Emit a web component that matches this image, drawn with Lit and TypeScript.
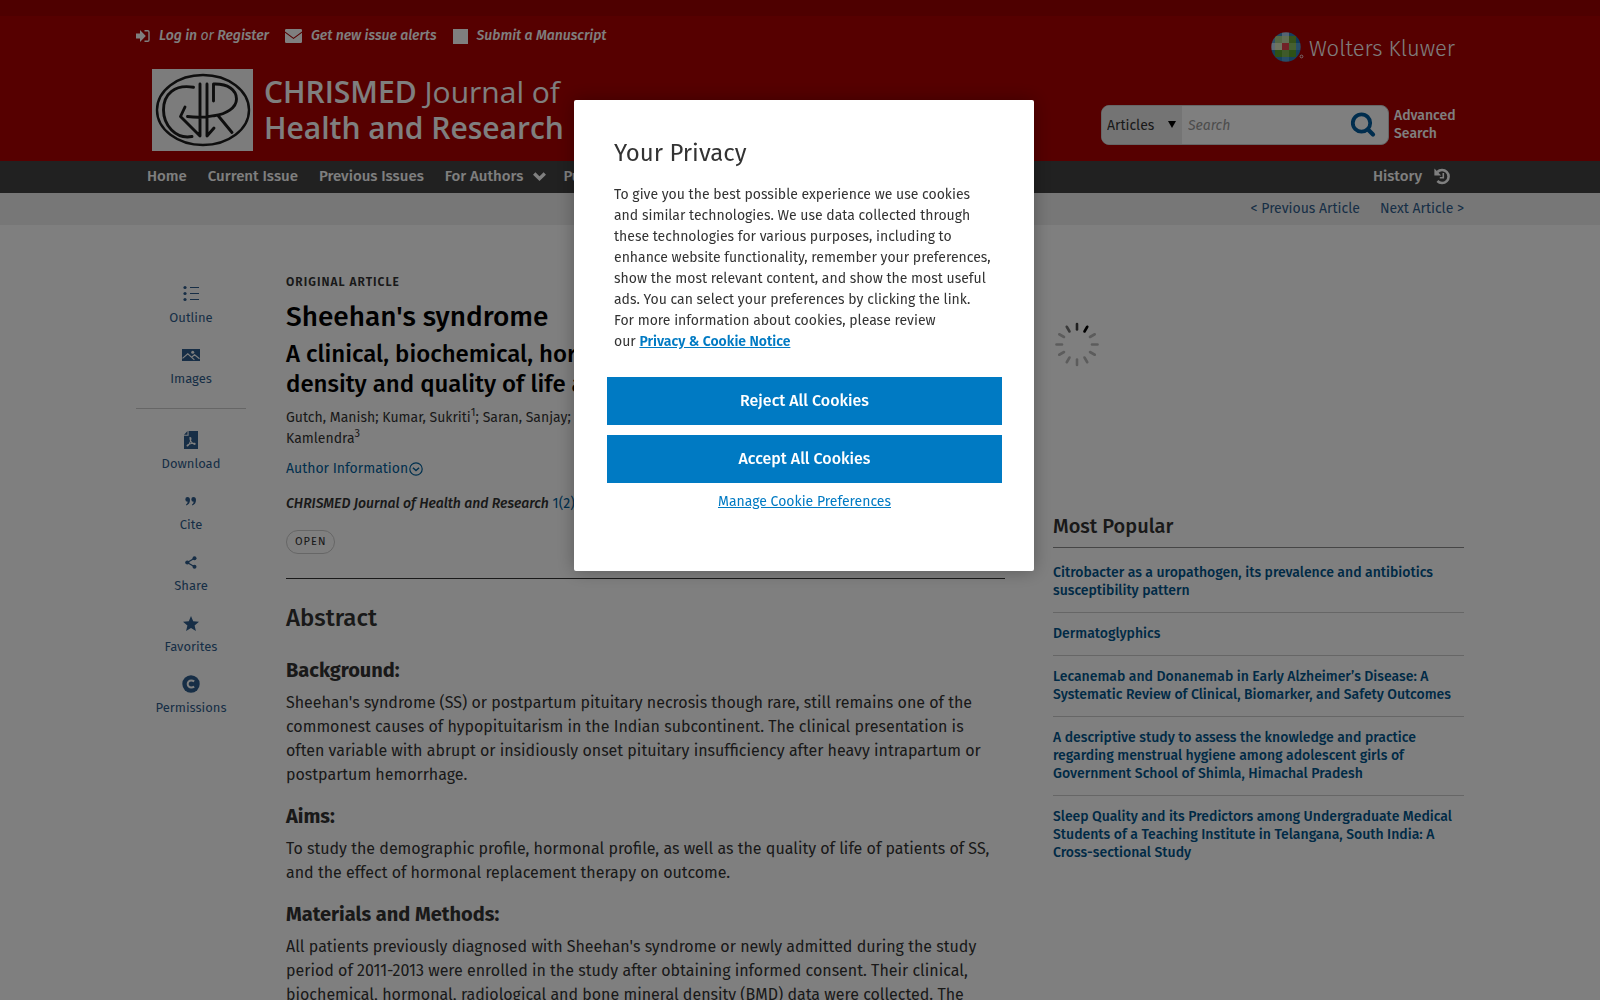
import { LitElement, html, css, svg } from "lit";
import { customElement } from "lit/decorators.js";

const icons = {
  login: svg`<svg width="14" height="14" viewBox="0 0 14 14"><path fill="currentColor" d="M0 4.500h4V1L9.800 7 4 13V9.500H0z"/><path fill="none" stroke="currentColor" stroke-width="1.400" d="M8.500 1.700h3.200q1.300 0 1.300 1.300v8q0 1.300-1.300 1.300H8.500"/></svg>`,
  mail: svg`<svg width="17" height="14" viewBox="0 0 17 14"><path fill="currentColor" d="M0 1.200Q0 0 1.200 0h14.600Q17 0 17 1.200v1.200L8.500 8.700 0 2.400zM0 3.700l8.500 6.300L17 3.700v9.100q0 1.200-1.200 1.200H1.200Q0 14 0 12.800z"/></svg>`,
  square: svg`<svg width="15" height="15" viewBox="0 0 15 15"><rect width="15" height="15" fill="currentColor"/></svg>`,
  chevron: svg`<svg width="13" height="9" viewBox="0 0 13 9"><path fill="none" stroke="currentColor" stroke-width="3.400" d="M1.200 1.500 6.500 6.600l5.300-5.100"/></svg>`,
  history: svg`<svg width="17" height="17" viewBox="0 0 17 17"><path fill="none" stroke="currentColor" stroke-width="2.600" d="M3.400 4A6.500 6.500 0 1 1 3.400 13"/><path fill="currentColor" d="M.4.600v6.800h6.800z"/><path fill="none" stroke="currentColor" stroke-width="1.600" d="M9.300 4.900v4.800H5.800"/></svg>`,
  search: svg`<svg width="26" height="26" viewBox="0 0 26 26"><circle cx="11.500" cy="11" r="8.700" fill="none" stroke="currentColor" stroke-width="3.800"/><path stroke="currentColor" stroke-width="4.200" stroke-linecap="round" d="m18 17.500 5 5"/></svg>`,
  outline: svg`<svg width="18" height="18" viewBox="0 0 18 18"><g fill="currentColor"><circle cx="3" cy="2.500" r="1.600"/><circle cx="3" cy="8.500" r="1.600"/><circle cx="3" cy="14.500" r="1.600"/><path d="M8 2h9v1H8zM8 8h9v1H8zM8 14h9v1H8z"/></g></svg>`,
  images: svg`<svg width="18" height="12" viewBox="0 0 18 12"><rect width="18" height="12" fill="currentColor"/><circle cx="10.700" cy="3.200" r="1.500" fill="#fff"/><path fill="none" stroke="#fff" stroke-width="1.100" d="M.5 9.300 5.800 4.800l6.600 6M9.800 8l2.800-2.200 4.900 4"/></svg>`,
  download: svg`<svg width="14" height="18" viewBox="0 0 14 18"><path fill="currentColor" d="M4.600 0H14v18H0V4.800h4.600zM3.500 0v3.700H0z"/><path fill="none" stroke="#fff" stroke-width="1.100" d="M6 6.500c1.400-.3 1 2.400.2 4.400-1 2.300-2.300 4.500-3 4-.8-.8 3-2.800 7.500-2.600.8.300.4 1.300-.5 1-2-.8-4.600-3.700-4.200-6.800z"/></svg>`,
  cite: svg`<svg width="12" height="9" viewBox="0 0 12 9"><path fill="currentColor" d="M2.500 0Q5 0 5 3q0 4-3.600 5.500L1 7.400q1.700-.9 1.700-2.600Q.3 4.800.3 2.400.3 0 2.500 0zM8.500 0Q11 0 11 3q0 4-3.600 5.500L7 7.400q1.700-.9 1.700-2.600-2.400 0-2.400-2.400Q6.300 0 8.500 0z"/></svg>`,
  share: svg`<svg width="12" height="13" viewBox="0 0 12 13"><path fill="none" stroke="currentColor" stroke-width="1.300" d="M9.500 2.300 2.300 6.500l7.200 4.200"/><g fill="currentColor"><circle cx="9.500" cy="2.300" r="2"/><circle cx="2.300" cy="6.500" r="2.100"/><circle cx="9.500" cy="10.700" r="2"/></g></svg>`,
  star: svg`<svg width="16" height="15" viewBox="0 0 16 15"><path fill="currentColor" d="m8 0 2.200 5.200 5.800.5-4.400 3.700L12.900 15 8 12 3.100 15l1.300-5.600L0 5.700l5.800-.5z"/></svg>`,
  permissions: svg`<svg width="18" height="18" viewBox="0 0 18 18"><circle cx="9" cy="9" r="8.700" fill="currentColor"/><path fill="none" stroke="#fff" stroke-width="2" d="M12.200 6.400Q10.900 5.500 9.200 5.500a3.500 3.500 0 0 0 0 7q1.700 0 3-.9"/></svg>`,
  circleDown: svg`<svg width="14" height="14" viewBox="0 0 14 14"><circle cx="7" cy="7" r="6.200" fill="none" stroke="currentColor" stroke-width="1.200"/><path fill="none" stroke="currentColor" stroke-width="1.400" d="m3.900 5.800 3.100 2.800 3.100-2.800"/></svg>`,
};

const journalMark = svg`<svg width="101" height="82" viewBox="0 0 101 82" role="img" aria-label="CHRISMED"><rect width="101" height="82" fill="#f8f8f8"/><g fill="none" stroke="#1c1c1c" stroke-width="2.900" stroke-linecap="round" stroke-linejoin="round"><ellipse cx="51" cy="41" rx="46" ry="35" stroke-width="2.400"/><path d="M41.500 18.300C23 15 11.500 25 11.500 41c0 15 12 29.500 28.500 26.500M48 15v52L28.500 47.500 33 38M55 15v52l7-8M61.500 32V15C76 14.500 84.500 21 84.500 30 84.500 39 74 45 62 46.700 53 48.500 43 48.500 35.500 47.500M66 46.500l14 17"/></g></svg>`;

const globeCells: [number, number, string][] = [
  [0, 0, "#1c74b8"], [1, 0, "#3f8cc6"], [2, 0, "#a9cbe8"], [3, 0, "#2f80bd"], [4, 0, "#0f67ad"],
  [0, 1, "#5c9fd0"], [1, 1, "#a9cf8a"], [2, 1, "#c5dcaa"], [3, 1, "#6aa336"], [4, 1, "#1c74b8"],
  [0, 2, "#bcd7ef"], [1, 2, "#dfe8c0"], [2, 2, "#e2444f"], [3, 2, "#8cc063"], [4, 2, "#4e9bd0"],
  [0, 3, "#2f80bd"], [1, 3, "#5da22e"], [2, 3, "#7fb457"], [3, 3, "#5da22e"], [4, 3, "#2f80bd"],
  [0, 4, "#0f67ad"], [1, 4, "#2f80bd"], [2, 4, "#4e9bd0"], [3, 4, "#2f80bd"], [4, 4, "#0f67ad"],
];
const cellEdges = [0, 4, 11, 18, 25, 30];
const globe = svg`<svg width="33" height="30" viewBox="0 0 33 30"><clipPath id="globe"><circle cx="15" cy="15" r="14.700"/></clipPath><g clip-path="url(#globe)">${globeCells.map(
  ([c, r, fill]) => svg`<rect x=${cellEdges[c]} y=${cellEdges[r]} width=${cellEdges[c + 1] - cellEdges[c]} height=${cellEdges[r + 1] - cellEdges[r]} fill=${fill}/>`
)}</g><circle cx="30.500" cy="24.500" r="1.400" fill="none" stroke="#fff" stroke-width=".8"/></svg>`;

const spokes = ["#404040", "#000", "#b9b9b9", "#b9b9b9", "#b9b9b9", "#b9b9b9", "#b9b9b9", "#b9b9b9", "#b9b9b9", "#b9b9b9", "#b9b9b9", "#777"];
const spinner = svg`<svg width="46" height="46" viewBox="0 0 46 46" role="img" aria-label="Loading">${spokes.map(
  (stroke, i) => svg`<path d="M24 3v5.500" stroke=${stroke} stroke-width="2.600" stroke-linecap="round" transform="rotate(${i * 30} 24 23.500)"/>`
)}</svg>`;

const popular = [
  ["Citrobacter as a uropathogen, its prevalence and antibiotics", "susceptibility pattern"],
  ["Dermatoglyphics"],
  ["Lecanemab and Donanemab in Early Alzheimer’s Disease: A", "Systematic Review of Clinical, Biomarker, and Safety Outcomes"],
  ["A descriptive study to assess the knowledge and practice", "regarding menstrual hygiene among adolescent girls of", "Government School of Shimla, Himachal Pradesh"],
  ["Sleep Quality and its Predictors among Undergraduate Medical", "Students of a Teaching Institute in Telangana, South India: A", "Cross-sectional Study"],
];

const sections = [
  { title: "Background:", lines: [
    "Sheehan's syndrome (SS) or postpartum pituitary necrosis though rare, still remains one of the",
    "commonest causes of hypopituitarism in the Indian subcontinent. The clinical presentation is",
    "often variable with abrupt or insidiously onset pituitary insufficiency after heavy intrapartum or",
    "postpartum hemorrhage.",
  ] },
  { title: "Aims:", lines: [
    "To study the demographic profile, hormonal profile, as well as the quality of life of patients of SS,",
    "and the effect of hormonal replacement therapy on outcome.",
  ] },
  { title: "Materials and Methods:", lines: [
    "All patients previously diagnosed with Sheehan's syndrome or newly admitted during the study",
    "period of 2011-2013 were enrolled in the study after obtaining informed consent. Their clinical,",
    "biochemical, hormonal, radiological and bone mineral density (BMD) data were collected. The",
  ] },
];

const broken = (lines: string[]) => lines.map((l, i) => (i ? html`<br>${l}` : l));

@customElement("site-header")
class SiteHeader extends LitElement {
  static styles = css`
    :host { display: block; background: #ac0000; border-top: 16px solid #9c0000; color: #fff; }
    .inner { display: flex; justify-content: space-between; max-width: 1328px; margin: 0 auto; padding: 8px 0 10px; }
    a { color: inherit; text-decoration: none; }
    .links { display: flex; gap: 16px; height: 22px; line-height: 22px; margin-top: 1px; font-size: 14px; font-style: italic; font-weight: 500; white-space: nowrap; }
    .link { display: flex; align-items: center; gap: 9px; }
    .or { font-weight: 400; }
    .brand { display: flex; align-items: center; gap: 11px; margin: 22px 0 0 16px; font: 600 30px/36px "Open Sans", sans-serif; white-space: nowrap; }
    .brand svg { display: block; flex: none; }
    .light { font-weight: 400; }
    .side { display: flex; flex-direction: column; justify-content: space-between; align-items: flex-end; padding: 8px 9px 6px 0; }
    .publisher { display: flex; align-items: center; gap: 5px; font-size: 22px; line-height: 26px; font-weight: 300; }
    .publisher span { padding-top: 4px; }
    .finder { display: flex; gap: 5px; align-items: center; }
    .box { display: flex; box-sizing: border-box; width: 288px; height: 40px; border: 1px solid #ccc; border-radius: 8px; background: #fff; overflow: hidden; }
    .kind { position: relative; display: flex; }
    select { appearance: none; width: 80px; border: 0; border-radius: 0; padding: 0 0 0 5px; background: #e8e8e8; color: #333; font: inherit; font-size: 14px; }
    .arrow { position: absolute; right: 6px; top: 15px; border: 4px solid transparent; border-top: 7px solid #000; border-bottom: 0; pointer-events: none; }
    input { flex: 1; min-width: 0; border: 0; padding: 0 6px; background: none; font: inherit; font-size: 14px; font-style: italic; }
    input::placeholder { color: #999; }
    .go { border: 0; padding: 0 12px 0 0; background: none; color: #005b9c; display: flex; align-items: center; }
    .advanced { width: 61px; font-size: 14px; line-height: 18px; font-weight: 500; }
  `;
  render() {
    return html`
      <div class="inner">
        <div>
          <div class="links">
            <span class="link">${icons.login}<span><a href="#login">Log in</a> <span class="or">or</span> <a href="#register">Register</a></span></span>
            <a class="link" href="#alerts">${icons.mail}Get new issue alerts</a>
            <a class="link" href="#submit">${icons.square}Submit a Manuscript</a>
          </div>
          <a class="brand" href="#home">${journalMark}<span>CHRISMED <span class="light">Journal of</span><br>Health and Research</span></a>
        </div>
        <div class="side">
          <a class="publisher" href="#publisher">${globe}<span>Wolters Kluwer</span></a>
          <div class="finder">
            <div class="box">
              <label class="kind"><select aria-label="Search in"><option>Articles</option></select><span class="arrow"></span></label>
              <input type="text" placeholder="Search" aria-label="Search">
              <button class="go" aria-label="Search">${icons.search}</button>
            </div>
            <a class="advanced" href="#advanced">Advanced Search</a>
          </div>
        </div>
      </div>`;
  }
}

@customElement("site-nav")
class SiteNav extends LitElement {
  static styles = css`
    :host { display: block; font-size: 15px; }
    a { color: inherit; text-decoration: none; }
    .bar { background: #424242; color: #fff; font-weight: 500; }
    .items { display: flex; align-items: center; gap: 21px; box-sizing: border-box; max-width: 1328px; height: 32px; margin: 0 auto; padding: 0 13px 2px 11px; white-space: nowrap; }
    .item { display: flex; align-items: center; gap: 10px; margin-right: -4px; }
    .history { display: flex; align-items: center; gap: 12px; margin-left: auto; }
    .pager { background: #efefef; color: #2f5d8c; }
    .pages { display: flex; justify-content: flex-end; align-items: center; gap: 20px; box-sizing: border-box; max-width: 1328px; height: 32px; margin: 0 auto; padding-bottom: 2px; font-size: 14px; }
  `;
  render() {
    return html`
      <nav class="bar"><div class="items">
        <a href="#home">Home</a><a href="#current">Current Issue</a><a href="#previous">Previous Issues</a>
        <a class="item" href="#authors">For Authors ${icons.chevron}</a><a href="#publish">Pu</a>
        <a class="history" href="#history">History ${icons.history}</a>
      </div></nav>
      <div class="pager"><div class="pages"><a href="#prev">&lt; Previous Article</a><a href="#next">Next Article &gt;</a></div></div>`;
  }
}

@customElement("article-tools")
class ArticleTools extends LitElement {
  static styles = css`
    :host { display: block; padding-top: 56px; color: #2f5d8c; font-size: 13px; line-height: 18px; }
    a { display: flex; flex-direction: column; align-items: center; height: 61px; color: inherit; text-decoration: none; }
    .glyph { display: flex; align-items: center; justify-content: center; height: 26px; margin-bottom: 2px; }
    .group + .group { border-top: 1px solid #ccc; padding-top: 18px; margin-top: 5px; }
  `;
  tool(icon: unknown, label: string) {
    return html`<a href="#${label.toLowerCase()}"><span class="glyph">${icon}</span>${label}</a>`;
  }
  render() {
    return html`
      <div class="group">${this.tool(icons.outline, "Outline")}${this.tool(icons.images, "Images")}</div>
      <div class="group">${this.tool(icons.download, "Download")}${this.tool(icons.cite, "Cite")}${this.tool(icons.share, "Share")}${this.tool(icons.star, "Favorites")}${this.tool(icons.permissions, "Permissions")}</div>`;
  }
}

@customElement("article-body")
class ArticleBody extends LitElement {
  static styles = css`
    :host { display: block; padding-top: 47px; color: #333; white-space: nowrap; }
    h1, h2, h3, h4, p { margin: 0; }
    a { color: #00609c; text-decoration: none; }
    .kind { font-size: 12px; line-height: 20px; font-weight: 600; letter-spacing: 1px; }
    h1 { margin-top: 7px; font-size: 28px; line-height: 36px; font-weight: 500; color: #000; }
    h2 { margin-top: 4px; font-size: 24px; line-height: 30px; font-weight: 500; color: #000; }
    .authors { margin-top: 8px; font-size: 14px; line-height: 21px; }
    sup { font-size: 11px; line-height: 0; }
    .info { display: flex; align-items: center; gap: 1px; margin-top: 9px; font-size: 14px; line-height: 22px; }
    .source { margin-top: 13px; font-size: 14px; line-height: 22px; }
    em { font-weight: 500; }
    .open { display: inline-block; box-sizing: border-box; margin-top: 15px; border: 1px solid #ccc; border-radius: 12px; padding: 0 8px; font-size: 11px; line-height: 22px; letter-spacing: 1px; }
    hr { margin: 24px 0 0; border: 0; border-top: 1px solid #333; }
    h3 { margin: 22px 0 23px; font-size: 24px; line-height: 34px; font-weight: 500; }
    h4 { font-size: 20px; line-height: 24px; font-weight: 700; }
    .text { margin: 9px 0 17px; font-size: 16px; line-height: 24px; }
  `;
  render() {
    return html`
      <div class="kind">ORIGINAL ARTICLE</div>
      <h1>Sheehan's syndrome</h1>
      <h2>A clinical, biochemical, hormonal profile<br>density and quality of life assessment</h2>
      <p class="authors">Gutch, Manish; Kumar, Sukriti<sup>1</sup>; Saran, Sanjay;<br>Kamlendra<sup>3</sup></p>
      <a class="info" href="#authors">Author Information${icons.circleDown}</a>
      <p class="source"><em>CHRISMED Journal of Health and Research</em> <a href="#issue">1(2)</a></p>
      <span class="open">OPEN</span>
      <hr>
      <h3>Abstract</h3>
      ${sections.map((s) => html`<h4>${s.title}</h4><p class="text">${broken(s.lines)}</p>`)}`;
  }
}

@customElement("popular-list")
class PopularList extends LitElement {
  static styles = css`
    :host { display: block; padding-top: 96px; color: #333; }
    svg { display: block; }
    h2 { margin: 145px 0 0; padding-bottom: 7px; border-bottom: 1px solid #8c8c8c; font-size: 20px; line-height: 28px; font-weight: 500; }
    ul { margin: 0; padding: 4px 0 0; list-style: none; }
    li { padding: 12px 0; font-size: 14px; line-height: 18px; font-weight: 500; white-space: nowrap; }
    li + li { border-top: 1px solid #ccc; }
    a { color: #00558c; text-decoration: none; }
  `;
  render() {
    return html`${spinner}<h2>Most Popular</h2>
      <ul>${popular.map((p) => html`<li><a href="#popular">${broken(p)}</a></li>`)}</ul>`;
  }
}

@customElement("privacy-dialog")
class PrivacyDialog extends LitElement {
  static styles = css`
    :host { position: fixed; inset: 0; display: flex; justify-content: center; align-items: flex-start; padding: 100px 0 0 8px; background: rgba(0, 0, 0, 0.5); }
    .panel { box-sizing: border-box; width: 460px; padding: 34px 32px 59px 33px; border-radius: 2px; background: #fff; color: #333; box-shadow: 0 0 18px rgba(0, 0, 0, 0.3); }
    h2 { margin: 0 7px; font-size: 24px; line-height: 38px; font-weight: 400; }
    p { margin: 12px 7px 25px; font-size: 14px; line-height: 21px; white-space: nowrap; }
    a { color: #007ac3; }
    p a { font-weight: 600; }
    button { display: block; width: 100%; height: 48px; border: 0; padding: 0 0 2px; background: #007ac3; color: #fff; font: inherit; font-size: 16px; font-weight: 500; }
    button + button { margin-top: 10px; }
    .manage { display: block; margin-top: 8px; font-size: 14px; line-height: 21px; text-align: center; }
  `;
  render() {
    return html`
      <section class="panel" role="dialog" aria-label="Your Privacy">
        <h2>Your Privacy</h2>
        <p>${broken([
          "To give you the best possible experience we use cookies",
          "and similar technologies. We use data collected through",
          "these technologies for various purposes, including to",
          "enhance website functionality, remember your preferences,",
          "show the most relevant content, and show the most useful",
          "ads. You can select your preferences by clicking the link.",
          "For more information about cookies, please review",
          "our ",
        ])}<a href="#notice">Privacy &amp; Cookie Notice</a></p>
        <button>Reject All Cookies</button>
        <button>Accept All Cookies</button>
        <a class="manage" href="#manage">Manage Cookie Preferences</a>
      </section>`;
  }
}

@customElement("app-root")
class AppRoot extends LitElement {
  static styles = css`
    :host { display: block; height: 100vh; overflow: hidden; background: #fff; font-family: "Fira Sans", Roboto, "Liberation Sans", sans-serif; }
    .page { display: grid; grid-template-columns: 110px minmax(0, 759fr) minmax(0, 459fr); max-width: 1328px; margin: 0 auto; }
    article-body { margin-left: 40px; }
    popular-list { margin-left: 48px; }
  `;
  render() {
    return html`
      <site-header></site-header>
      <site-nav></site-nav>
      <main class="page"><article-tools></article-tools><article-body></article-body><popular-list></popular-list></main>
      <privacy-dialog></privacy-dialog>`;
  }
}
